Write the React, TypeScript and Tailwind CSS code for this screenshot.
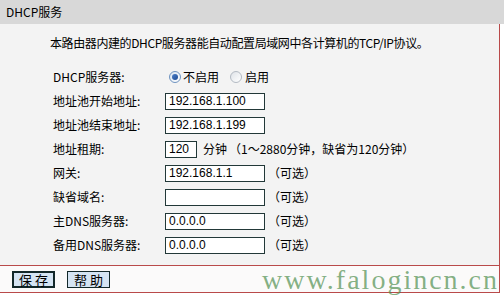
import React from "react";

const Radio: React.FC<{ checked?: boolean }> = ({ checked }) =>
  checked ? (
    <span className="shrink-0 w-[12px] h-[12px] rounded-full border border-[#6f93c0] bg-gradient-to-br from-[#d9e4f0] to-white flex items-center justify-center">
      <span className="w-[6px] h-[6px] rounded-full bg-gradient-to-br from-[#4c7fc8] to-[#1d4b94]" />
    </span>
  ) : (
    <span className="shrink-0 block w-[12px] h-[12px] rounded-full border border-[#b3bac3] bg-gradient-to-br from-[#dfe3e8] to-white" />
  );

const Field: React.FC<{ value?: string; w?: string }> = ({ value = "", w = "w-[100px]" }) => (
  <div
    className={`${w} h-[17px] border border-[#223838] bg-white pl-[3px] flex items-center font-['Liberation_Sans',sans-serif] text-[12px] leading-none text-black`}
  >
    {value}
  </div>
);

const Row: React.FC<{ label: string; children: React.ReactNode }> = ({ label, children }) => (
  <div className="h-[24px] flex items-center">
    <div className="w-[112px]">{label}</div>
    <div className="flex items-center">{children}</div>
  </div>
);

const Opt = () => <span className="ml-[3px]">（可选）</span>;

export default function App() {
  return (
    <div className="w-[504px] h-[296px] bg-white relative overflow-hidden font-['Noto_Sans_CJK_SC',sans-serif] text-[12px] leading-[16px] text-black">
      {/* Title bar */}
      <div className="h-[24px] bg-[#d8d8d8] flex items-center pl-[6px]">DHCP服务</div>

      <div className="w-[500px] border-r border-[#b94a4a] bg-[#f3f3f3]">
        <div className="h-[241px] pt-[11px]">
          <p className="pl-[50px] tracking-[-0.4px]">本路由器内建的DHCP服务器能自动配置局域网中各计算机的TCP/IP协议。</p>

          <div className="pl-[53px] mt-[14px]">
            <Row label="DHCP服务器:">
              <div className="flex items-center pl-[4px]">
                <Radio checked />
                <span className="ml-[2px]">不启用</span>
                <span className="ml-[11px] flex">
                  <Radio />
                </span>
                <span className="ml-[3px]">启用</span>
              </div>
            </Row>
            <Row label="地址池开始地址:">
              <Field value="192.168.1.100" />
            </Row>
            <Row label="地址池结束地址:">
              <Field value="192.168.1.199" />
            </Row>
            <Row label="地址租期:">
              <Field value="120" w="w-[32px]" />
              <span className="ml-[6px]">分钟</span>
              <span className="ml-[2px]">（1～2880分钟，缺省为120分钟）</span>
            </Row>
            <Row label="网关:">
              <Field value="192.168.1.1" />
              <Opt />
            </Row>
            <Row label="缺省域名:">
              <Field />
              <Opt />
            </Row>
            <Row label="主DNS服务器:">
              <Field value="0.0.0.0" />
              <Opt />
            </Row>
            <Row label="备用DNS服务器:">
              <Field value="0.0.0.0" />
              <Opt />
            </Row>
          </div>
        </div>

        {/* Buttons */}
        <div className="h-[28px] border-t border-b border-[#b94a4a] bg-[#fbfafa] flex items-center pl-[12px] gap-[12px]">
          <button className="w-[43px] h-[17px] border-2 border-[#13282a] bg-[#d5e4f3] flex items-center justify-center text-[13px] leading-none">
            保 存
          </button>
          <button className="w-[43px] h-[17px] border border-[#13282a] bg-[#d5e4f3] flex items-center justify-center text-[13px] leading-none">
            帮 助
          </button>
        </div>
      </div>

      {/* Watermark */}
      <div className="absolute left-[262px] top-[266px] font-['Liberation_Serif',serif] text-[28px] leading-[28px] tracking-[2px] text-[#4f8f4f]/70 whitespace-nowrap">
        www.falogincn.cn
      </div>
    </div>
  );
}
